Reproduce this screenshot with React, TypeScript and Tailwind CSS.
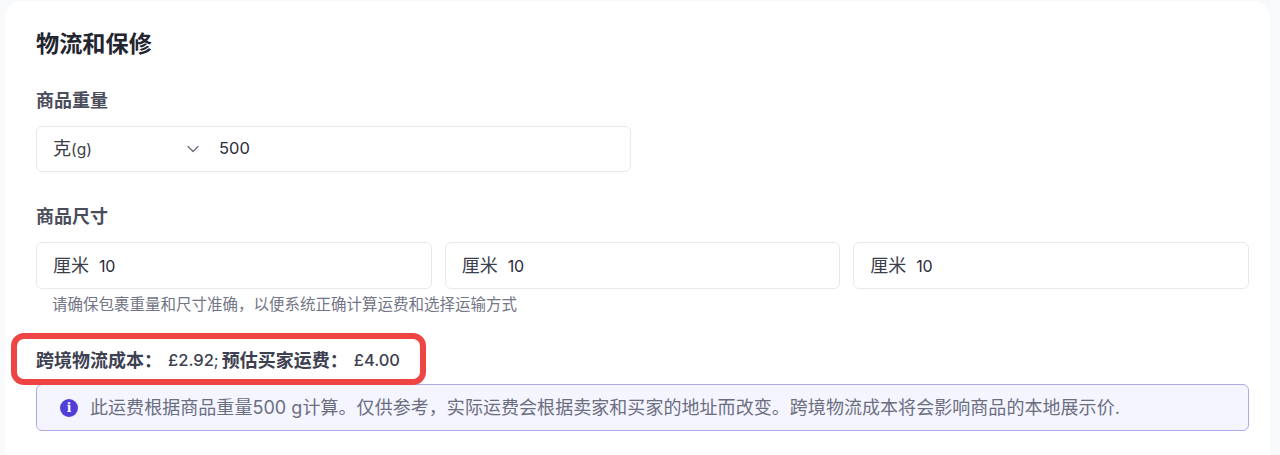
import { ChevronDown } from "lucide-react";

const font = { fontFamily: '"Inter", "Noto Sans CJK SC", sans-serif' };

function SizeInput() {
  return (
    <div className="flex h-[47px] flex-1 items-center rounded-[6px] border border-[#e8e9ee] bg-white pl-[16px] text-[18px] text-[#3a3d4a]">
      <span>厘米</span>
      <span className="ml-[10px] text-[16px] tracking-[-0.3px] text-[#2a2c38]">10</span>
    </div>
  );
}

export default function App() {
  return (
    <div className="h-[455px] w-[1280px] overflow-hidden bg-[#f8f9fb] pl-[5px] pr-[10px] pt-[1px]" style={font}>
      <div className="relative h-[470px] rounded-[16px] bg-white pl-[31px] pr-[21px] pt-[27px]">
        <h2 className="text-[23.2px] font-bold leading-[32px] text-[#23252f]">物流和保修</h2>

        <div className="mt-[29px] text-[18px] font-bold leading-[24px] text-[#4a4d5c]">商品重量</div>
        <div className="mt-[13px] flex h-[46px] w-[595px] items-center rounded-[6px] border border-[#e8e9ee] bg-white pl-[16px] pb-[1px] text-[#3a3d4a]">
          <span className="w-[130px] text-[18px]">克<span className="text-[15.5px]">(g)</span></span>
          <ChevronDown className="h-[20px] w-[20px] text-[#6b6e7b]" strokeWidth={1.5} />
          <span className="ml-[16px] text-[16.5px] text-[#2a2c38]">500</span>
        </div>

        <div className="mt-[33px] text-[18px] font-bold leading-[24px] text-[#4a4d5c]">商品尺寸</div>
        <div className="mt-[13px] flex gap-[13px]">
          <SizeInput />
          <SizeInput />
          <SizeInput />
        </div>
        <p className="mt-[5px] pl-[16px] text-[15.5px] leading-[22px] text-[#737686]">
          请确保包裹重量和尺寸准确，以便系统正确计算运费和选择运输方式
        </p>

        <div className="mt-[32px] flex h-[24px] items-center whitespace-pre text-[18px] font-semibold text-[#3d4050]">
          跨境物流成本：<span className="ml-[6px] text-[16.5px] font-medium">£2.92</span><span className="text-[16px] font-normal">;</span><span className="ml-[3px]">预估买家运费：</span><span className="ml-[6px] text-[16.5px] font-medium">£4.00</span>
        </div>

        <div className="mt-[12px] flex h-[47px] items-center rounded-[6px] border border-[#b1a9e8] bg-[#f5f5ff] pl-[23px] text-[18px] text-[#6b6e80]">
          <span className="flex h-[18px] w-[18px] items-center justify-center rounded-full bg-[#4f3fd8] text-[12px] font-bold text-white" style={{ fontFamily: '"DejaVu Serif", serif' }}>i</span>
          <span className="ml-[12px] tracking-[0.05px]">此运费根据商品重量500 g计算。仅供参考，实际运费会根据卖家和买家的地址而改变。跨境物流成本将会影响商品的本地展示价.</span>
        </div>

        {/* red annotation drawn over the cost line */}
        <div className="absolute left-[6px] top-[332px] h-[52px] w-[415px] rounded-[13px] border-[6px] border-[#ef4444]" />
      </div>
    </div>
  );
}
